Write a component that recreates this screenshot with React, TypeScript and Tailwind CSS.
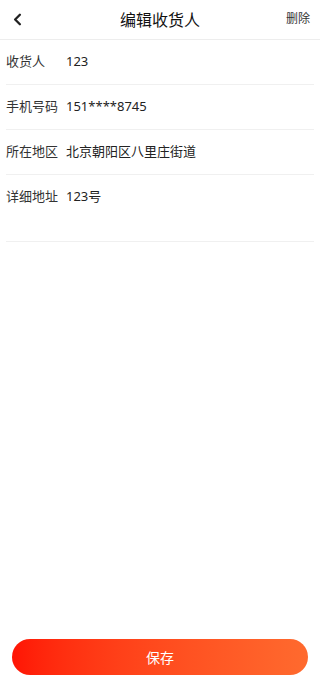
import { ChevronLeft } from "lucide-react";

const rows = [
  { label: "收货人", value: "123" },
  { label: "手机号码", value: "151****8745" },
  { label: "所在地区", value: "北京朝阳区八里庄街道" },
];

export default function App() {
  return (
    <div
      className="flex h-[686px] w-[320px] flex-col bg-white text-[#222]"
      style={{ fontFamily: '"Noto Sans", "Noto Sans CJK SC", sans-serif' }}
    >
      <header className="relative flex h-[40px] items-center justify-center border-b border-[#ededed]">
        <ChevronLeft className="absolute left-[8px] top-[10px] h-[19px] w-[19px]" strokeWidth={3} />
        <h1 className="text-[16px] leading-none text-[#111]">编辑收货人</h1>
        <span className="absolute right-[10px] top-[13px] text-[12px] leading-none text-[#333]">删除</span>
      </header>

      <div className="px-[6px]">
        {rows.map((r) => (
          <div key={r.label} className="flex h-[45px] items-center border-b border-[#f0f0f0] text-[13px]">
            <span className="w-[60px] text-[#333]">{r.label}</span>
            <span className="text-[#222]">{r.value}</span>
          </div>
        ))}
        <div className="flex h-[67px] items-start border-b border-[#f0f0f0] pt-[12px] text-[13px]">
          <span className="w-[60px] text-[#333]">详细地址</span>
          <span className="text-[#222]">123号</span>
        </div>
      </div>

      <div className="flex-1" />

      <div className="px-[12px] pb-[11px]">
        <button className="flex h-[36px] w-full items-center justify-center rounded-full bg-gradient-to-r from-[#ff1405] to-[#ff6a2e] text-[14px] text-white">
          保存
        </button>
      </div>
    </div>
  );
}
